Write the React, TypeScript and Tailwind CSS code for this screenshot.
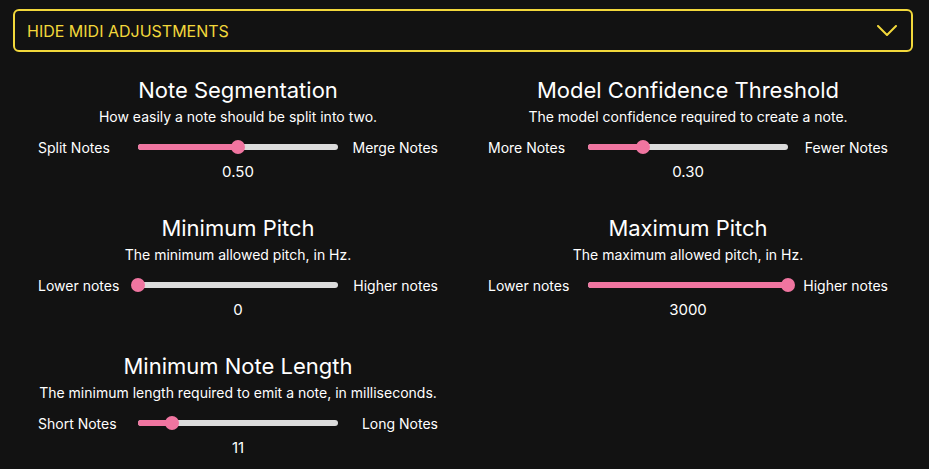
interface Setting {
  title: string;
  description: string;
  low: string;
  high: string;
  value: string;
  fraction: number;
}

const settings: Setting[] = [
  {
    title: 'Note Segmentation',
    description: 'How easily a note should be split into two.',
    low: 'Split Notes',
    high: 'Merge Notes',
    value: '0.50',
    fraction: 0.5,
  },
  {
    title: 'Model Confidence Threshold',
    description: 'The model confidence required to create a note.',
    low: 'More Notes',
    high: 'Fewer Notes',
    value: '0.30',
    fraction: 0.273,
  },
  {
    title: 'Minimum Pitch',
    description: 'The minimum allowed pitch, in Hz.',
    low: 'Lower notes',
    high: 'Higher notes',
    value: '0',
    fraction: 0,
  },
  {
    title: 'Maximum Pitch',
    description: 'The maximum allowed pitch, in Hz.',
    low: 'Lower notes',
    high: 'Higher notes',
    value: '3000',
    fraction: 1,
  },
  {
    title: 'Minimum Note Length',
    description: 'The minimum length required to emit a note, in milliseconds.',
    low: 'Short Notes',
    high: 'Long Notes',
    value: '11',
    fraction: 0.168,
  },
];

function Slider({ fraction }: { fraction: number }) {
  return (
    <div className="relative w-[200px] h-[6px] rounded-full bg-[#dcdcdc]">
      <div
        className="absolute left-0 top-0 h-[6px] rounded-full bg-[#f075a0]"
        style={{ width: `${fraction * 200}px` }}
      />
      <div
        className="absolute top-1/2 w-[14px] h-[14px] -translate-x-1/2 -translate-y-1/2 rounded-full bg-[#f075a0]"
        style={{ left: `${fraction * 200}px` }}
      />
    </div>
  );
}

function SettingBlock({ s }: { s: Setting }) {
  return (
    <div className="flex flex-col items-center mb-[31px]">
      <h2 className="h-[28px] leading-[28px] text-[22px] font-normal text-white">{s.title}</h2>
      <p className="mt-[3px] h-[20px] leading-[20px] text-[14px] text-white">{s.description}</p>
      {/* slider row: label / track / label */}
      <div className="mt-[10px] h-[20px] w-[400px] flex items-center text-[14px] text-white">
        <span className="w-[100px] text-left">{s.low}</span>
        <Slider fraction={s.fraction} />
        <span className="w-[100px] text-right">{s.high}</span>
      </div>
      <div className="mt-[4px] h-[22px] leading-[22px] text-[15px] text-white">{s.value}</div>
    </div>
  );
}

export default function App() {
  return (
    <div className="min-h-screen bg-[#121212] px-[13px] pt-[9px] font-['Inter',sans-serif]">
      <button className="w-[900px] h-[43px] flex items-center justify-between pl-[12px] pr-[14px] border-2 border-[#f2d83b] rounded-[6px] text-[#f2d83b]">
        <span className="text-[16px] font-normal">HIDE MIDI ADJUSTMENTS</span>
        <svg width="20" height="11" viewBox="0 0 20 11" fill="none" stroke="currentColor" strokeWidth="2" strokeLinecap="round" strokeLinejoin="round">
          <polyline points="1,1 10,10 19,1" />
        </svg>
      </button>

      <div className="mt-[24px] w-[900px] grid grid-cols-2">
        {settings.map((s) => (
          <SettingBlock key={s.title} s={s} />
        ))}
      </div>
    </div>
  );
}
